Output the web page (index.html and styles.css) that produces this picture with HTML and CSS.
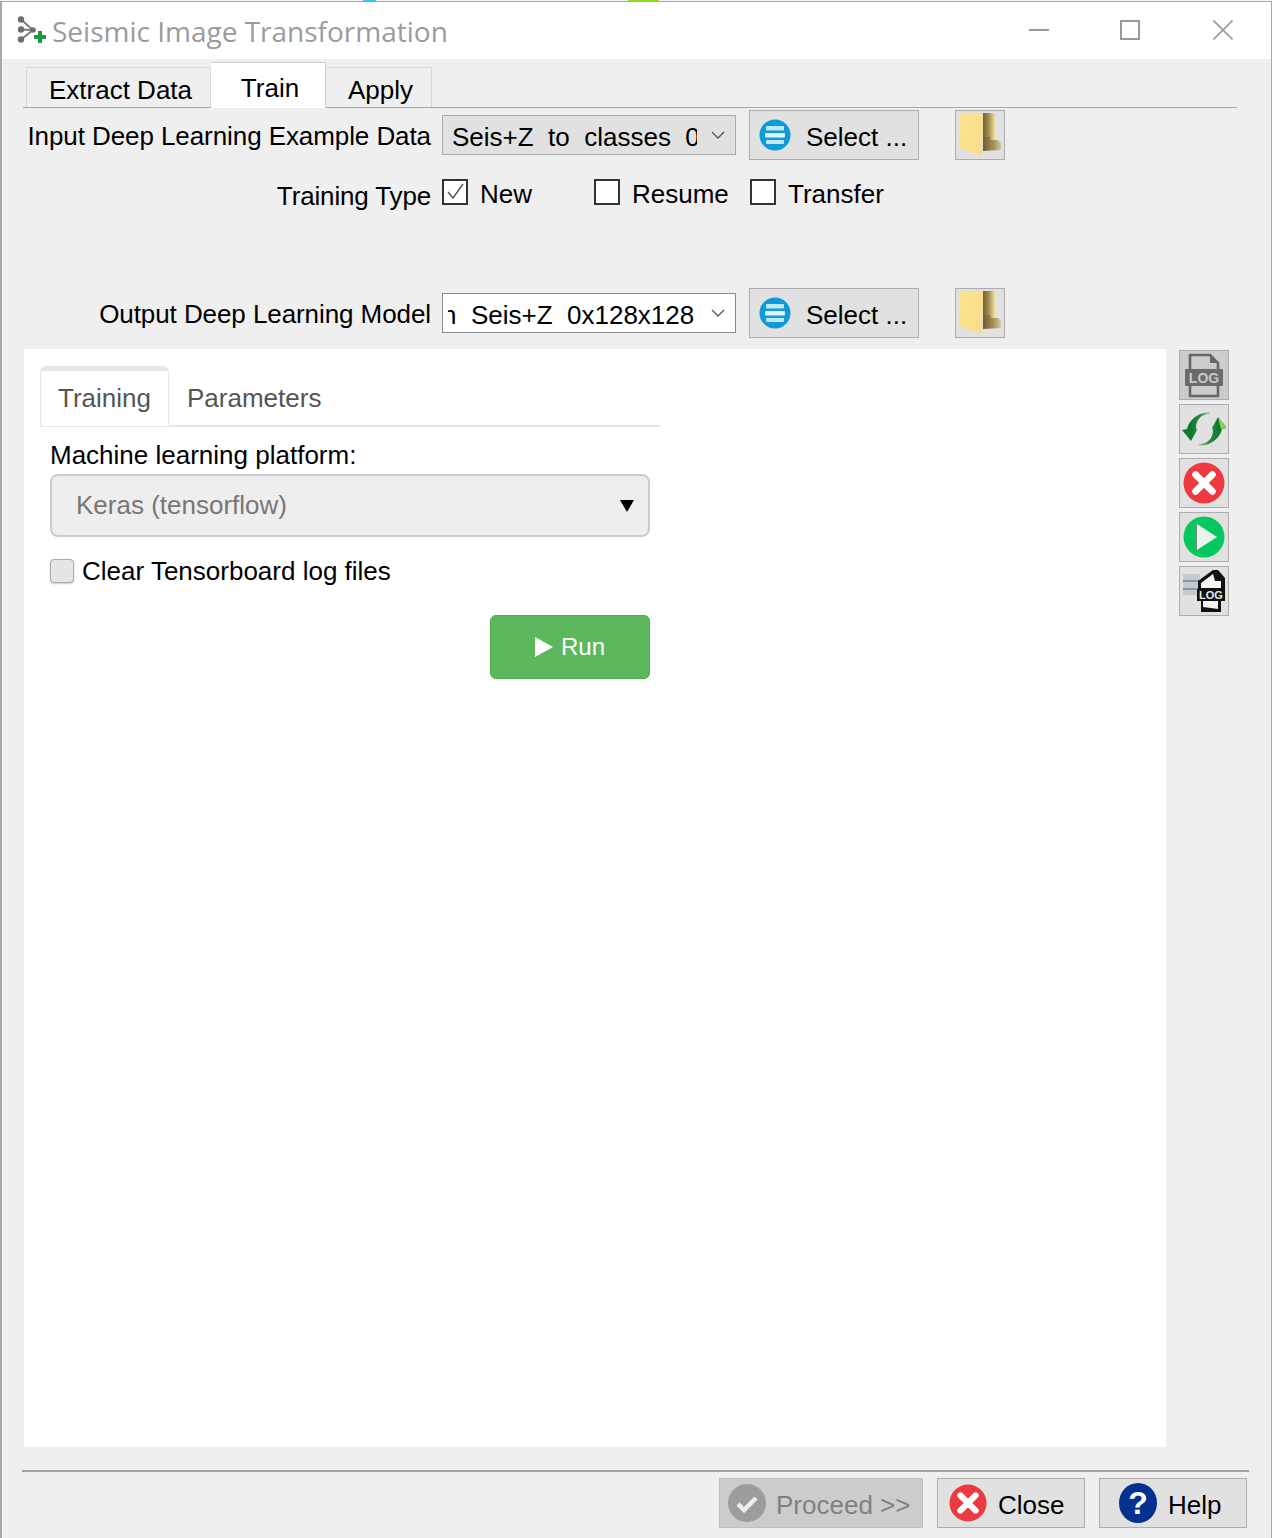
FILE: index.html
```html
<!DOCTYPE html>
<html lang="en">
<head>
  <meta charset="UTF-8" />
  <title>Seismic Image Transformation</title>
  <link rel="stylesheet" href="styles.css">
</head>
<body>

<svg class="defs" width="0" height="0">
  <defs>
    <linearGradient id="folder-back" x1="0" x2="1" y1="0" y2="0">
      <stop offset="0" stop-color="#75602c" />
      <stop offset="0.45" stop-color="#a08a4c" />
      <stop offset="1" stop-color="#f2e2a2" />
    </linearGradient>
    <linearGradient id="folder-low" x1="0" x2="1" y1="0" y2="0">
      <stop offset="0" stop-color="#6e5c2e" />
      <stop offset="0.6" stop-color="#a8925a" />
      <stop offset="1" stop-color="#d3c8a4" />
    </linearGradient>
    <linearGradient id="folder-front" x1="0" x2="1" y1="0" y2="1">
      <stop offset="0" stop-color="#fde48f" />
      <stop offset="1" stop-color="#f9dc8a" />
    </linearGradient>
    <linearGradient id="sync-tail" gradientUnits="userSpaceOnUse" x1="9" x2="28" y1="0" y2="0">
      <stop offset="0" stop-color="#0e7a32" />
      <stop offset="0.5" stop-color="#2f8c4a" />
      <stop offset="1" stop-color="#a3c7a3" />
    </linearGradient>
  </defs>
  <symbol id="list-icon" viewBox="0 0 32 32">
    <circle cx="16" cy="16" r="15.5" fill="#0f9bd7" />
    <rect x="7" y="7" width="18" height="4.5" rx="1" fill="#bfe8f8" />
    <rect x="6" y="14" width="20" height="4.5" rx="1" fill="#dff4fc" />
    <rect x="7" y="21" width="18" height="4" rx="1" fill="#bfe8f8" />
  </symbol>
  <symbol id="folder-icon" viewBox="0 0 42 44">
    <path d="M24 0 H36 V30 H24 Z" fill="url(#folder-back)" />
    <path d="M24 24 L31 24 L32 27 H39 L42 30 V37 L24 38 Z" fill="url(#folder-low)" />
    <path d="M0 0 H24 L23 43 L0 35 Z" fill="url(#folder-front)" />
  </symbol>
  <symbol id="x-icon" viewBox="0 0 40 40">
    <circle cx="20" cy="20" r="19.5" fill="#ec3a40" />
    <path d="M12 12 L28 28 M28 12 L12 28" stroke="#fff" stroke-width="6.5" stroke-linecap="round" />
  </symbol>
</svg>

<span class="desk-bit desk-cyan"></span>
<span class="desk-bit desk-green"></span>

<div class="window">
  <header class="titlebar">
    <svg class="app-icon" width="32" height="30" viewBox="0 0 32 30">
      <path d="M5 3.5 L17 14 L5 13.5 M17 14 L5 23.5" fill="none" stroke="#777" stroke-width="1.8" />
      <circle cx="5" cy="3.5" r="3.2" fill="#6e6e6e" />
      <circle cx="5" cy="13.5" r="3.2" fill="#6e6e6e" />
      <circle cx="5" cy="23.5" r="3.2" fill="#6e6e6e" />
      <circle cx="17" cy="14" r="2.8" fill="#6e6e6e" />
      <path d="M18 21 H30 M24 15 V27" stroke="#1c9a3c" stroke-width="4" />
    </svg>
    <span class="app-title">Seismic Image Transformation</span>
    <div class="win-controls">
      <svg width="20" height="20" viewBox="0 0 20 20"><path d="M0 10 H20" stroke="#999" stroke-width="2" /></svg>
      <svg width="20" height="20" viewBox="0 0 20 20"><rect x="1" y="1" width="18" height="18" fill="none" stroke="#999" stroke-width="2" /></svg>
      <svg class="win-close" width="20" height="20" viewBox="0 0 20 20"><path d="M0.5 0.5 L19.5 19.5 M19.5 0.5 L0.5 19.5" stroke="#999" stroke-width="1.6" /></svg>
    </div>
  </header>

  <nav class="tabs">
    <div class="tab tab-extract">Extract Data</div>
    <div class="tab tab-active">Train</div>
    <div class="tab tab-apply">Apply</div>
  </nav>

  <section class="form">
    <div class="form-row">
      <label class="row-label">Input Deep Learning Example Data</label>
      <div class="combo combo-grey">
        <span class="combo-text">Seis+Z  to  classes  0x128x128</span>
        <svg class="chevron" width="14" height="8" viewBox="0 0 14 8"><path d="M1 1 L7 7 L13 1" fill="none" stroke="#555" stroke-width="1.3" /></svg>
      </div>
      <button class="btn btn-select"><svg width="32" height="32"><use href="#list-icon" /></svg><span class="btn-label">Select ...</span></button>
      <button class="btn btn-folder"><svg width="42" height="44"><use href="#folder-icon" /></svg></button>
    </div>

    <div class="form-row row-type">
      <label class="row-label">Training Type</label>
      <div class="check check-new">
        <span class="box">
          <svg width="22" height="22" viewBox="0 0 22 22"><path d="M4 11 L9 17 L19 3" fill="none" stroke="#555" stroke-width="1.4" /></svg>
        </span><span class="check-label">New</span>
      </div>
      <div class="check check-resume"><span class="box"></span><span class="check-label">Resume</span></div>
      <div class="check"><span class="box"></span><span class="check-label">Transfer</span></div>
    </div>

    <div class="form-row">
      <label class="row-label">Output Deep Learning Model</label>
      <div class="combo combo-white">
        <span class="combo-text combo-scrolled">n  Seis+Z  0x128x128</span>
        <svg class="chevron" width="14" height="8" viewBox="0 0 14 8"><path d="M1 1 L7 7 L13 1" fill="none" stroke="#555" stroke-width="1.3" /></svg>
      </div>
      <button class="btn btn-select"><svg width="32" height="32"><use href="#list-icon" /></svg><span class="btn-label">Select ...</span></button>
      <button class="btn btn-folder"><svg width="42" height="44"><use href="#folder-icon" /></svg></button>
    </div>
  </section>

  <div class="workspace">
    <main class="panel">
      <div class="panel-tabs">
        <div class="panel-tab panel-tab-active">Training</div>
        <div class="panel-tab">Parameters</div>
      </div>
      <div class="panel-body">
        <label class="field-label">Machine learning platform:</label>
        <div class="dropdown">
          <span>Keras (tensorflow)</span>
          <span class="dropdown-arrow"></span>
        </div>
        <div class="clear-row">
          <span class="soft-box"></span>Clear Tensorboard log files
        </div>
        <div class="run-row">
          <button class="run-btn"><span class="run-arrow"></span>Run</button>
        </div>
      </div>
    </main>

    <aside class="side-tools">
      <button class="tool tool-dark">
        <svg width="42" height="46" viewBox="0 0 42 46">
          <path d="M7 18 V3 H27 L35 11 V18 M7 34 V44 H35 V34" fill="none" stroke="#666" stroke-width="2.6" />
          <path d="M27 3 L35 11 H27 Z" fill="#666" />
          <rect x="2" y="17" width="38" height="17" rx="1" fill="#6a6a6a" />
          <text x="21" y="31" class="log-text" fill="#c9c9c9">LOG</text>
        </svg>
      </button>
      <button class="tool">
        <svg width="44" height="36" viewBox="0 0 44 36">
          <path d="M28 1.5 V3 C19 3 14 9 14 17 L15 19 L9 30 L0 19 L5 18 C7 9 16 1 28 1.5 Z" fill="url(#sync-tail)" />
          <path transform="rotate(180 22.5 18)" d="M28 1.5 V3 C19 3 14 9 14 17 L15 19 L9 30 L0 19 L5 18 C7 9 16 1 28 1.5 Z" fill="url(#sync-tail)" />
          <path d="M36 6 L45 17 L39 18 Z" fill="#8fd14f" />
        </svg>
      </button>
      <button class="tool"><svg width="42" height="42"><use href="#x-icon" /></svg></button>
      <button class="tool">
        <svg width="42" height="42" viewBox="0 0 42 42">
          <circle cx="21" cy="21" r="20.5" fill="#05c75f" />
          <path d="M14 8 L34 21 L14 34 Z" fill="#e8f5ec" />
          <path d="M13 8 V34" stroke="#7a8a80" stroke-width="2" />
        </svg>
      </button>
      <button class="tool">
        <svg width="46" height="46" viewBox="0 0 46 46">
          <rect x="2" y="6" width="17" height="21" fill="#c4cbd0" />
          <path d="M2 13 H20 M2 21 H20" stroke="#6f8794" stroke-width="1.6" />
          <path d="M17 13 L32 2 H37 L44 10 V22 H40 V44 H20 V22 H17 Z" fill="#111" />
          <path d="M20 15 L32 6 L34 13 H40 V20 H20 Z" fill="#f4f4f4" />
          <rect x="16" y="21" width="28" height="12" fill="#111" />
          <path d="M22 33 H37 V41 L22 39 Z" fill="#f4f4f4" />
          <text x="30" y="31" class="log-text log-small" fill="#e8e8e8">LOG</text>
        </svg>
      </button>
    </aside>
  </div>

  <footer class="footer">
    <button class="btn foot-btn btn-proceed">
      <svg width="38" height="38" viewBox="0 0 38 38">
        <circle cx="19" cy="19" r="19" fill="#9c9c9c" />
        <path d="M10 20 L16 26 L28 14" fill="none" stroke="#eee" stroke-width="4.5" />
      </svg><span class="btn-label">Proceed &gt;&gt;</span>
    </button>
    <button class="btn foot-btn btn-close"><svg width="38" height="40"><use href="#x-icon" /></svg><span class="btn-label">Close</span></button>
    <button class="btn foot-btn btn-help">
      <svg width="38" height="40" viewBox="0 0 38 40">
        <ellipse cx="19" cy="20" rx="19" ry="20" fill="#04318f" />
        <text x="19" y="31" class="help-mark">?</text>
      </svg><span class="btn-label">Help</span>
    </button>
  </footer>
</div>

</body>
</html>
```

FILE: styles.css
```css
* {
  box-sizing: border-box;
}

body {
  margin: 0;
  padding-top: 1px;
  font-family: "Liberation Sans", Arial, sans-serif;
  font-size: 26px;
  color: #000;
  background: #f6f6f6;
}

.defs {
  position: absolute;
}

/* bits of the desktop showing above the window */
.desk-bit {
  position: absolute;
  top: 0;
  height: 2px;
}

.desk-cyan {
  left: 363px;
  width: 13px;
  background: #35c4ee;
}

.desk-green {
  left: 628px;
  width: 31px;
  background: #8fdc1e;
}

.window {
  width: 1272px;
  height: 1537px;
  overflow: hidden;
  background: #efefef;
  border-top: 1px solid #a8a8a8;
  border-left: 2px solid #a8a8a8;
  border-right: 1px solid #a8a8a8;
}

.titlebar {
  display: flex;
  align-items: center;
  height: 57px;
  padding-left: 14px;
  background: #fff;
}

.app-icon {
  margin-right: 4px;
}

.app-title {
  font-family: "Open Sans", sans-serif;
  font-size: 28px;
  color: #9b9b9b;
}

.win-controls {
  display: flex;
  gap: 71px;
  margin-left: auto;
  margin-right: 38px;
  margin-top: -1px;
}

.win-close {
  margin-left: 2px;
}

.tabs {
  display: flex;
  align-items: flex-end;
  height: 49px;
  margin-left: 21px;
  margin-right: 34px;
  padding-left: 3px;
  border-bottom: 1px solid #a8a8a8;
}

.tab {
  display: flex;
  justify-content: center;
  align-items: center;
  height: 40px;
  padding: 6px 0 0 4px;
  border: 1px solid #d9d9d9;
  border-bottom: none;
}

.tab-extract {
  width: 185px;
}

.tab-apply {
  width: 106px;
  border-left: none;
}

.tab-active {
  width: 115px;
  height: 46px;
  margin-bottom: -1px;
  background: #fff;
  border-color: #d0d0d0;
  border-left: none;
}

.form {
  padding-top: 2px;
}

.form-row {
  display: flex;
  align-items: center;
  height: 50px;
}

.row-label {
  width: 429px;
  padding-top: 2px;
  text-align: right;
  white-space: nowrap;
  letter-spacing: -0.08px;
}

.combo {
  display: flex;
  align-items: center;
  width: 294px;
  height: 40px;
  margin-left: 11px;
  border: 1px solid #ababab;
}

.combo-grey {
  background: #e1e1e1;
}

.combo-white {
  background: #fff;
  border-color: #8a8a8a;
}

.combo-text {
  width: 245px;
  margin-left: 9px;
  padding-top: 4px;
  overflow: hidden;
  white-space: pre;
}

.combo-scrolled {
  width: 250px;
  margin-left: 5px;
  text-indent: -6px;
}

.chevron {
  margin-left: auto;
  margin-right: 10px;
}

.btn {
  display: flex;
  align-items: center;
  height: 50px;
  padding: 0;
  font-family: inherit;
  font-size: 26px;
  color: #000;
  background: #e1e1e1;
  border: 1px solid #adadad;
}

.btn-label {
  padding-top: 4px;
}

.btn-select {
  width: 170px;
  margin-left: 13px;
  padding-left: 9px;
  gap: 15px;
}

.btn-folder {
  justify-content: center;
  width: 50px;
  margin-left: 36px;
}

.row-type {
  align-items: flex-start;
  height: 128px;
  padding-top: 19px;
}

.row-type .row-label {
  padding-top: 2px;
  letter-spacing: -0.15px;
}

.check {
  display: flex;
  align-items: center;
  gap: 12px;
  height: 26px;
}

.check-label {
  padding-top: 4px;
}

.check-new {
  width: 152px;
  margin-left: 11px;
}

.check-resume {
  width: 156px;
}

.box {
  display: flex;
  align-items: center;
  justify-content: center;
  width: 26px;
  height: 26px;
  background: #fff;
  border: 2px solid #333;
}

.workspace {
  display: flex;
  align-items: flex-start;
  margin-top: 11px;
  padding-left: 22px;
}

.panel {
  width: 1142px;
  height: 1098px;
  padding: 17px 0 0 16px;
  background: #fff;
}

.panel-tabs {
  display: flex;
  width: 620px;
  height: 61px;
  border-bottom: 2px solid #e6e6e6;
}

.panel-tab {
  display: flex;
  align-items: center;
  height: 60px;
  padding: 4px 18px 0;
  color: #555;
}

.panel-tab-active {
  width: 129px;
  padding: 0 0 0 17px;
  border: 1px solid #e6e6e6;
  border-top: 5px solid #e6e6e6;
  border-bottom: none;
  border-radius: 6px 6px 0 0;
  background: #fff;
}

.panel-body {
  width: 600px;
  margin-left: 10px;
}

.field-label {
  display: block;
  height: 47px;
  padding-top: 13px;
}

.dropdown {
  display: flex;
  align-items: center;
  justify-content: space-between;
  height: 63px;
  padding: 0 14px 0 24px;
  color: #777;
  background: #eee;
  border: 2px solid #ccc;
  border-radius: 8px;
}

.dropdown-arrow {
  width: 0;
  height: 0;
  border-left: 7px solid transparent;
  border-right: 7px solid transparent;
  border-top: 12px solid #000;
}

.clear-row {
  display: flex;
  align-items: center;
  gap: 8px;
  margin-top: 22px;
  height: 24px;
}

.soft-box {
  width: 24px;
  height: 24px;
  background: #e6e6e6;
  border: 1px solid #aaa;
  border-radius: 4px;
  box-shadow: 0 1px 2px #ccc;
}

.run-row {
  display: flex;
  justify-content: flex-end;
  margin-top: 32px;
}

.run-btn {
  display: flex;
  align-items: center;
  justify-content: center;
  gap: 8px;
  width: 160px;
  height: 64px;
  padding-left: 6px;
  font-family: inherit;
  font-size: 24px;
  color: #fff;
  background: #5cb85c;
  border: 1px solid #4cae4c;
  border-radius: 6px;
}

.run-arrow {
  width: 0;
  height: 0;
  border-top: 10px solid transparent;
  border-bottom: 10px solid transparent;
  border-left: 18px solid #fff;
}

.side-tools {
  display: flex;
  flex-direction: column;
  gap: 4px;
  margin-top: 1px;
  margin-left: 13px;
}

.tool {
  display: flex;
  align-items: center;
  justify-content: center;
  width: 50px;
  height: 50px;
  padding: 0;
  background: #e1e1e1;
  border: 1px solid #adadad;
}

.tool-dark {
  background: #ccc;
}

.log-text {
  font-family: "Liberation Sans", sans-serif;
  font-size: 14px;
  font-weight: bold;
  text-anchor: middle;
}

.log-small {
  font-size: 11px;
}

.footer {
  display: flex;
  justify-content: flex-end;
  gap: 14px;
  width: 1227px;
  height: 58px;
  margin-top: 23px;
  margin-left: 20px;
  padding-top: 6px;
  padding-right: 2px;
  border-top: 2px solid #a0a0a0;
}

.foot-btn {
  width: 148px;
  padding-left: 11px;
  gap: 11px;
}

.btn-proceed {
  width: 204px;
  padding-left: 8px;
  gap: 10px;
  color: #808080;
  background: #ccc;
  border-color: #bfbfbf;
}

.btn-help {
  padding-left: 19px;
  gap: 11px;
}

.help-mark {
  font-family: "Liberation Sans", sans-serif;
  font-size: 32px;
  font-weight: bold;
  fill: #fff;
  text-anchor: middle;
}
```
